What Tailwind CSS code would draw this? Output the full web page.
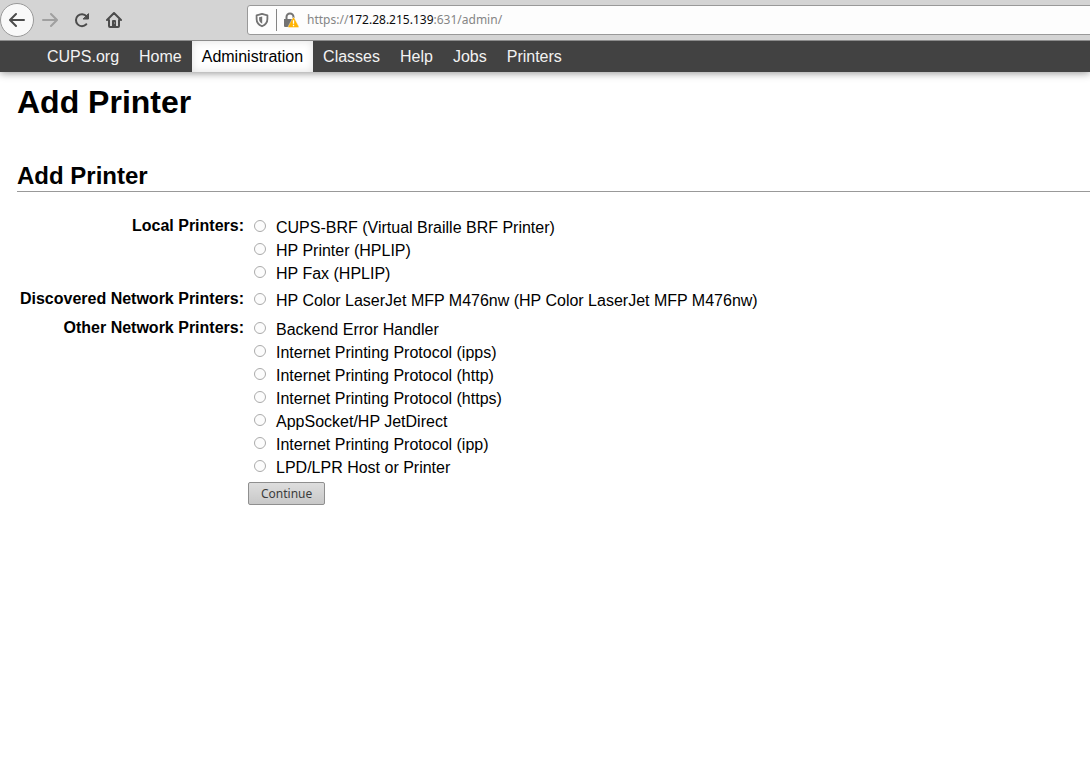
<!DOCTYPE html>
<html lang="en">
<head>
<meta charset="utf-8">
<title>Add Printer - CUPS</title>
<script src="https://cdn.jsdelivr.net/npm/@tailwindcss/browser@4"></script>
</head>
<body class="min-h-screen bg-white text-black font-['Liberation_Sans',Arial,sans-serif] text-base overflow-x-hidden">
<header class="relative z-10 flex h-[41px] items-center border-b border-[#8c8c8c] bg-[#d4d4d4]">
  <button type="button" aria-label="Back" class="flex size-[34px] shrink-0 items-center justify-center rounded-full border border-[#999] bg-[#f9f9f9] text-[#4c4c4c]">
    <svg class="size-4" viewBox="0 0 16 16" fill="none" stroke="currentColor" stroke-width="2" stroke-linecap="round" stroke-linejoin="round"><path d="M15 8H1.5M7 2 1 8l6 6"/></svg>
  </button>
  <button type="button" aria-label="Forward" disabled class="flex size-8 shrink-0 items-center justify-center text-[#a0a0a0]">
    <svg class="size-4" viewBox="0 0 16 16" fill="none" stroke="currentColor" stroke-width="2" stroke-linecap="round" stroke-linejoin="round"><path d="M1 8h13.500M9 2l6 6-6 6"/></svg>
  </button>
  <button type="button" aria-label="Reload" class="flex size-8 shrink-0 items-center justify-center text-[#4c4c4c]">
    <svg class="size-4" viewBox="0 0 16 16" fill="none" stroke="currentColor" stroke-width="2" stroke-linecap="round" stroke-linejoin="round"><path d="M12.300 12.300A6 6 0 1 1 12.500 4.200l1.500 1.800"/><path d="M14.500 2v5h-5z" fill="currentColor" stroke-width="1"/></svg>
  </button>
  <button type="button" aria-label="Home" class="flex size-8 shrink-0 items-center justify-center text-[#4c4c4c]">
    <svg class="size-4" viewBox="0 0 16 16" fill="none" stroke="currentColor" stroke-width="2" stroke-linecap="round" stroke-linejoin="round"><path d="M1 8l7-7 7 7M3 8v6q0 1 1 1h8q1 0 1-1V8"/><path d="M6 14V9q0-1 1-1h2q1 0 1 1v5z" fill="currentColor" stroke="none"/><path d="M8.500 11h.01" stroke="#d4d4d4" stroke-width="1"/></svg>
  </button>
  <div class="-mr-2 ml-[117px] flex h-[30px] flex-1 items-center rounded-[3px] border border-[#999] bg-[#fdfdfd]">
    <svg class="ml-1.5 size-4 shrink-0" viewBox="0 0 16 16" fill="none" stroke="#737373" stroke-linejoin="round"><path d="M8 1.800 2.600 3.300V7c0 3.500 2 5.800 5.400 7.300 3.400-1.500 5.400-3.800 5.400-7.300V3.300z" stroke-width="1.800"/><path d="M8.200 4.400v7.300C6 10.500 5.100 9 5.100 7V5.200z" fill="#737373" stroke="none"/></svg>
    <span class="mx-1.5 h-[22px] w-px bg-[#858585]"></span>
    <svg class="size-4 shrink-0" viewBox="0 0 16 16"><path d="M3.500 8V5a3.500 3.500 0 0 1 7 0V6" fill="none" stroke="#737373" stroke-width="2"/><path d="M1 7h11v8H2q-1 0-1-1z" fill="#737373"/><path d="M10.500 5.500q.5 0 .8.500l4.500 8.500q.2 1-.8 1H6q-1 0-.8-1L9.700 6q.3-.5.8-.5z" fill="#ffb300" stroke="#fdfdfd" stroke-width=".4"/><path d="M10.500 8.300v3.400M10.500 12.800v1.400" stroke="#fff" stroke-width="1.300"/></svg>
    <div class="relative ml-2 flex-1 font-['Noto_Sans',sans-serif] text-[12px] leading-5">
      <input type="text" aria-label="Address" value="https://172.28.215.139:631/admin/" class="block w-full bg-transparent text-transparent outline-none">
      <div aria-hidden="true" class="pointer-events-none absolute inset-0 text-[#858585]">https://<span class="text-[#0c0c0d]">172.28.215.139</span>:631/admin/</div>
    </div>
  </div>
</header>
<nav class="relative flex h-[31px] bg-[#424242] pl-[37px] leading-[31px] text-[#f2f2f2] shadow-[0_1px_8px_#00000070]">
  <a href="#" class="px-2.5">CUPS.org</a>
  <a href="#" class="px-2.5">Home</a>
  <a href="#" aria-current="page" class="bg-white px-2.5 text-black shadow-[inset_0_0_8px_#00000020]">Administration</a>
  <a href="#" class="px-2.5">Classes</a>
  <a href="#" class="px-2.5">Help</a>
  <a href="#" class="px-2.5">Jobs</a>
  <a href="#" class="px-2.5">Printers</a>
</nav>
<main class="pl-[17px] pt-2.5">
  <h1 class="text-[32px] font-bold leading-10">Add Printer</h1>
  <h2 class="mt-9 border-b border-[#999] pt-0.5 text-2xl font-bold leading-[31px]">Add Printer</h2>
  <form class="mt-6 grid grid-cols-[227px_1fr] gap-x-1">
    <h3 id="local" class="text-right font-bold leading-5">Local Printers:</h3>
    <div role="radiogroup" aria-labelledby="local" class="mb-1">
      <label class="flex h-[23px] items-start"><input type="radio" name="device" class="ml-1.5 mr-2.5 mt-1 size-3 shrink-0 appearance-none rounded-full border border-[#ababab] bg-[#fcfcfc]"><span class="leading-6">CUPS-BRF (Virtual Braille BRF Printer)</span></label>
      <label class="flex h-[23px] items-start"><input type="radio" name="device" class="ml-1.5 mr-2.5 mt-1 size-3 shrink-0 appearance-none rounded-full border border-[#ababab] bg-[#fcfcfc]"><span class="leading-6">HP Printer (HPLIP)</span></label>
      <label class="flex h-[23px] items-start"><input type="radio" name="device" class="ml-1.5 mr-2.5 mt-1 size-3 shrink-0 appearance-none rounded-full border border-[#ababab] bg-[#fcfcfc]"><span class="leading-6">HP Fax (HPLIP)</span></label>
    </div>
    <h3 id="found" class="text-right font-bold leading-5">Discovered Network Printers:</h3>
    <div role="radiogroup" aria-labelledby="found" class="mb-1.5">
      <label class="flex h-[23px] items-start"><input type="radio" name="device" class="ml-1.5 mr-2.5 mt-1 size-3 shrink-0 appearance-none rounded-full border border-[#ababab] bg-[#fcfcfc]"><span class="leading-6">HP Color LaserJet MFP M476nw (HP Color LaserJet MFP M476nw)</span></label>
    </div>
    <h3 id="other" class="text-right font-bold leading-5">Other Network Printers:</h3>
    <div role="radiogroup" aria-labelledby="other" class="mb-[3px]">
      <label class="flex h-[23px] items-start"><input type="radio" name="device" class="ml-1.5 mr-2.5 mt-1 size-3 shrink-0 appearance-none rounded-full border border-[#ababab] bg-[#fcfcfc]"><span class="leading-6">Backend Error Handler</span></label>
      <label class="flex h-[23px] items-start"><input type="radio" name="device" class="ml-1.5 mr-2.5 mt-1 size-3 shrink-0 appearance-none rounded-full border border-[#ababab] bg-[#fcfcfc]"><span class="leading-6">Internet Printing Protocol (ipps)</span></label>
      <label class="flex h-[23px] items-start"><input type="radio" name="device" class="ml-1.5 mr-2.5 mt-1 size-3 shrink-0 appearance-none rounded-full border border-[#ababab] bg-[#fcfcfc]"><span class="leading-6">Internet Printing Protocol (http)</span></label>
      <label class="flex h-[23px] items-start"><input type="radio" name="device" class="ml-1.5 mr-2.5 mt-1 size-3 shrink-0 appearance-none rounded-full border border-[#ababab] bg-[#fcfcfc]"><span class="leading-6">Internet Printing Protocol (https)</span></label>
      <label class="flex h-[23px] items-start"><input type="radio" name="device" class="ml-1.5 mr-2.5 mt-1 size-3 shrink-0 appearance-none rounded-full border border-[#ababab] bg-[#fcfcfc]"><span class="leading-6">AppSocket/HP JetDirect</span></label>
      <label class="flex h-[23px] items-start"><input type="radio" name="device" class="ml-1.5 mr-2.5 mt-1 size-3 shrink-0 appearance-none rounded-full border border-[#ababab] bg-[#fcfcfc]"><span class="leading-6">Internet Printing Protocol (ipp)</span></label>
      <label class="flex h-[23px] items-start"><input type="radio" name="device" class="ml-1.5 mr-2.5 mt-1 size-3 shrink-0 appearance-none rounded-full border border-[#ababab] bg-[#fcfcfc]"><span class="leading-6">LPD/LPR Host or Printer</span></label>
    </div>
    <button type="button" class="col-start-2 h-[23px] justify-self-start rounded-[2px] border border-[#8f8f8f] bg-linear-to-b from-[#dedede] to-[#c8c8c8] px-3 font-['Noto_Sans',sans-serif] text-[12px] leading-5 text-[#3c3c3c]">Continue</button>
  </form>
</main>
</body>
</html>
